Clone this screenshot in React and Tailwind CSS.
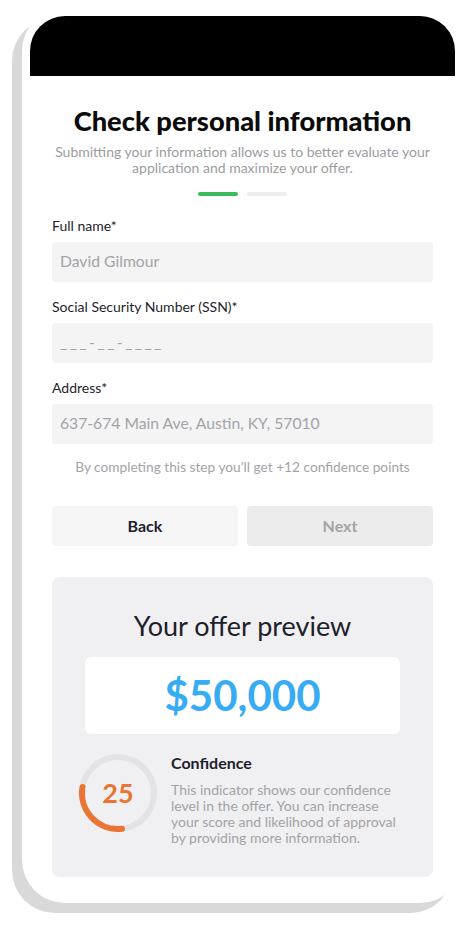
const Field = ({ label, value, mono }) => (
  <div>
    <div className="text-[14px] leading-[16px] text-[#1e1e2c]">{label}</div>
    <div className={`mt-2 h-10 rounded-[4px] bg-[#f4f4f5] px-2 flex items-center text-[15.7px] text-[#a3a3a6] ${mono ? 'tracking-[2.5px]' : ''}`}>
      {value}
    </div>
  </div>
);

const Gauge = ({ score }) => (
  <div className="relative w-20 h-20 shrink-0">
    <svg width="80" height="80" viewBox="0 0 80 80">
      <circle cx="40" cy="40" r="36" fill="none" stroke="#e3e3e6" strokeWidth="6" />
      <path d="M 4.5 34 A 36 36 0 0 0 44 75.8" fill="none" stroke="#ea7433" strokeWidth="6" strokeLinecap="round" />
    </svg>
    <div className="absolute inset-0 flex items-center justify-center text-[27px] font-bold text-[#ea7433]">
      {score}
    </div>
  </div>
);

export default function App() {
  return (
    <div className="w-[473px] h-[938px] bg-white overflow-hidden" style={{ fontFamily: 'Lato, "Open Sans", sans-serif' }}>
      <div className="ml-[22px] mt-[8px] w-[441px] h-[895px] rounded-[43px] bg-white shadow-[-10px_10px_0_#d9d9d9] p-2">
        <div className="h-full rounded-t-[35px] overflow-hidden">
          <div className="h-[60px] bg-black"></div>

          <div className="px-[22px]">
            <h1 className="mt-[29px] text-center text-[27.3px] leading-[32px] font-black text-[#0b0b0b]">
              Check personal information
            </h1>
            <p className="mt-[7px] text-center text-[14px] leading-[16px] text-[#9c9c9f]">
              Submitting your information allows us to better evaluate your
              <br />
              application and maximize your offer.
            </p>

            <div className="mt-4 flex justify-center gap-[9px]">
              <div className="w-10 h-[4px] rounded-full bg-[#3cbb5e]"></div>
              <div className="w-10 h-[4px] rounded-full bg-[#ededee]"></div>
            </div>

            <div className="mt-[22px] flex flex-col gap-[17px]">
              <Field label="Full name*" value="David Gilmour" />
              <Field label="Social Security Number (SSN)*" value="___-__-____" mono />
              <Field label="Address*" value="637-674 Main Ave, Austin, KY, 57010" />
            </div>

            <p className="mt-[15px] text-center text-[13.7px] leading-[16px] text-[#a3a3a6]">
              By completing this step you’ll get +12 confidence points
            </p>

            <div className="mt-[31px] grid grid-cols-2 gap-[9px]">
              <button className="h-10 rounded-[4px] bg-[#f5f5f6] text-[16px] font-bold text-[#1e1e2c]">Back</button>
              <button className="h-10 rounded-[4px] bg-[#ececed] text-[16px] font-bold text-[#a3a3a6]">Next</button>
            </div>

            <div className="mt-[31px] rounded-[8px] bg-[#f0f0f2] px-[33px] pt-[33px] pb-[31px]">
              <div className="text-center text-[27px] leading-[32px] text-[#1e1e2c]">Your offer preview</div>
              <div className="mt-[15px] h-[77px] rounded-[6px] bg-white flex items-center justify-center text-[42px] font-bold text-[#38abf5]">
                $50,000
              </div>
              <div className="mt-[19px] -ml-[7px] flex items-start gap-[13px]">
                <Gauge score={25} />
                <div>
                  <div className="text-[16px] leading-[20px] font-bold text-[#1e1e2c]">Confidence</div>
                  <p className="mt-[9px] text-[14px] leading-[16px] text-[#a3a3a6]">
                    This indicator shows our confidence level in the offer. You can increase your score and likelihood of approval by providing more information.
                  </p>
                </div>
              </div>
            </div>
          </div>
        </div>
      </div>
    </div>
  );
}
